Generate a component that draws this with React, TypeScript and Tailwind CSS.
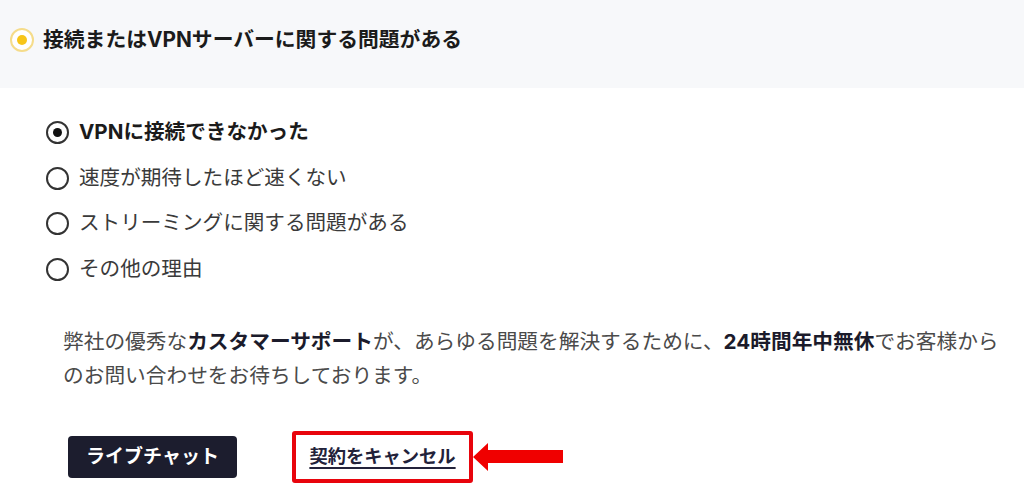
import React from "react";

const font = "font-['Inter','Noto_Sans_CJK_JP',sans-serif]";

const options = [
  { label: "VPNに接続できなかった", checked: true },
  { label: "速度が期待したほど速くない", checked: false },
  { label: "ストリーミングに関する問題がある", checked: false },
  { label: "その他の理由", checked: false },
];

const Radio = ({ checked }: { checked: boolean }) => (
  <span className="w-[23px] h-[23px] rounded-full border-2 border-[#333] flex items-center justify-center shrink-0">
    {checked && <span className="w-[9px] h-[9px] rounded-full bg-[#111]" />}
  </span>
);

export default function App() {
  return (
    <div className={`w-[1024px] h-[487px] bg-white overflow-hidden ${font}`}>
      {/* Selected category */}
      <div className="h-[88px] bg-[#f7f8fa] flex items-start pt-[28px] pl-[10px]">
        <span className="w-[24px] h-[24px] rounded-full border-2 border-[#f5dc8a] bg-white flex items-center justify-center">
          <span className="w-[10px] h-[10px] rounded-full bg-[#f7c518]" />
        </span>
        <h2 className="ml-[9px] text-[20.8px] leading-[24px] font-bold text-[#1b1b1b]">
          接続またはVPNサーバーに関する問題がある
        </h2>
      </div>

      {/* Reasons */}
      <div className="pl-[46px] pt-[22px] flex flex-col">
        {options.map((o) => (
          <label key={o.label} className="h-[45.5px] flex items-center gap-[10px]">
            <Radio checked={o.checked} />
            <span
              className={`text-[20.6px] ${o.checked ? "font-bold text-[#1b1b1b]" : "text-[#3a3a3a]"}`}
            >
              {o.label}
            </span>
          </label>
        ))}
      </div>

      <p className="mt-[33px] ml-[63px] w-[945px] text-[20.7px] leading-[34px] text-[#4a4a4a]">
        弊社の優秀な<b className="text-[#1b1b2b]">カスタマーサポート</b>が、あらゆる問題を解決するために、
        <b className="text-[#1b1b2b]">24時間年中無休</b>でお客様からのお問い合わせをお待ちしております。
      </p>

      {/* Actions */}
      <div className="mt-[38px] ml-[68px] flex items-center">
        <button className="w-[169px] h-[42px] rounded-[4px] bg-[#1c1d2e] text-white text-[19px] font-bold">
          ライブチャット
        </button>
        <div className="ml-[55px] w-[181px] h-[52px] border-4 border-[#e8040c] rounded-[3px] flex items-center justify-center">
          <a className="text-[18.3px] font-bold text-[#22223a] underline underline-offset-[4px] decoration-[1.5px]">
            契約をキャンセル
          </a>
        </div>
        <svg width="92" height="30" viewBox="0 0 92 30" className="shrink-0">
          <polygon points="0,15 15,1 15,8 90,8 90,21 15,21 15,29" fill="#f00000" />
        </svg>
      </div>
    </div>
  );
}
